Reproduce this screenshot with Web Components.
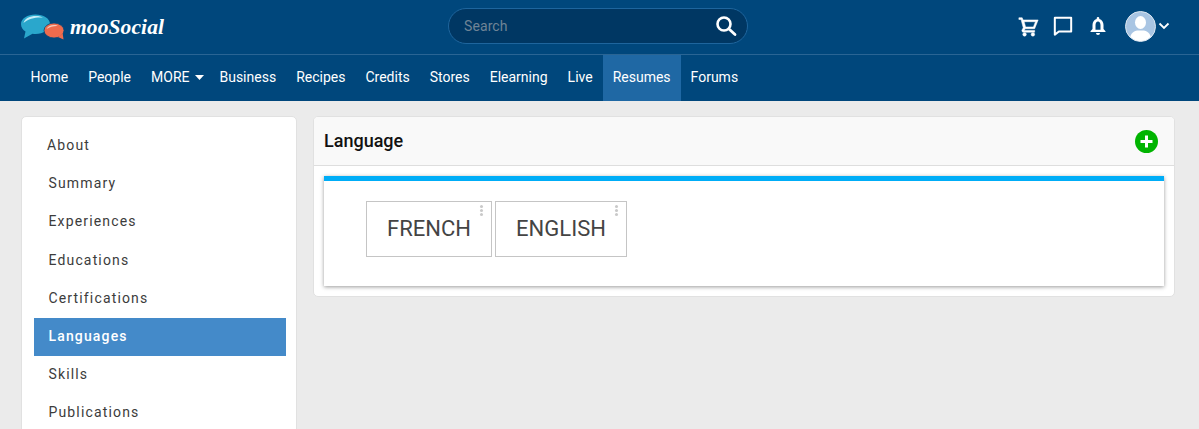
<!DOCTYPE html>
<html><head><meta charset="utf-8"><style>
html,body{margin:0;padding:0;height:429px;overflow:hidden;background:#ebebeb;font-family:Roboto,sans-serif}
</style></head><body>
<template id="t-header"><style>
:host{display:block;background:#00477c;color:#fff}
.top{height:54px;display:flex;align-items:center;position:relative;border-bottom:1px solid #2a6594;padding:0 0 0 21px;box-sizing:content-box}
.logo{display:flex;align-items:center;width:427px;height:54px}
.logo svg{display:block;margin-top:-1px}
.logo b{font:italic bold 21.500px "Liberation Serif",serif;color:#fff;margin-left:5px;letter-spacing:.1px;margin-top:1px}
.search{height:34px;border:1px solid #1e659d;border-radius:18px;background:#003763;display:flex;align-items:center;justify-content:space-between;padding:0 10px 0 15px;box-sizing:content-box;margin-top:-2px;flex:none;width:273px}
.search span{font-size:14px;color:#6f8496;letter-spacing:.1px}
.icons{margin-left:auto;display:flex;align-items:center;height:52px;padding:0 29px 2px 0}
.icons svg{display:block}
.av{width:31px;height:31px;border-radius:50%;background:#a9c5e3;border:1px solid #dbe6f0;box-sizing:border-box;overflow:hidden}
nav{height:46px;display:flex;padding-left:20.500px}
</style><div class="top"><div class="logo">
<svg width="44" height="26" viewBox="0 0 44 26"><path d="M14.500 .5C6.500.5 0 4.500 0 10c0 3.500 2 6 4.500 7.500L3 24.500l8.500-4.700c1 .1 2 .2 3 .2C22.500 20 29 15.500 29 10S22.500.5 14.500.5z" fill="#2aa7cc"/><path d="M2.500 9C3.500 4.500 9 2 15 2c3 0 5.500.7 7 1.600C15.500 3 7.500 4.500 2.500 9z" fill="#c4edf8"/><ellipse cx="33" cy="16.500" rx="10" ry="7.500" fill="#ee6b4d" stroke="#00477c" stroke-width=".8"/><path d="M37 23l5.500 2.500-.8-6z" fill="#ee6b4d"/><path d="M25.500 15c1.200-2.400 4-4 7.500-4 2 0 3.200.5 4 1-4-.3-8 .8-11.500 3z" fill="#f9c9b9"/></svg>
<b>mooSocial</b></div>
<div class="search"><span>Search</span>
<svg width="22" height="22" viewBox="0 0 22 22" fill="none" stroke="#fff"><circle cx="9" cy="9" r="6.500" stroke-width="2.600"/><path d="M14 14l6 5.500" stroke-width="2.800" stroke-linecap="round"/></svg></div>
<div class="icons">
<svg width="21" height="21" viewBox="0 0 24 24" fill="#fff" stroke="#fff" stroke-width=".6" style="margin-right:14px"><path d="M1 2h3.800l1 2.500H23l-4 10H8.300l-.9 1.600c-.1.2 0 .4.200.4H19v2H6c-1 0-2-1.200-1.400-2.500L6 13.500 3.500 4H1zm6 4.500 1.700 6h8.900l2.400-6z"/><circle cx="7.500" cy="21" r="2"/><circle cx="17" cy="21" r="2"/></svg>
<svg width="20" height="20" viewBox="0 0 22 22" fill="none" stroke="#fff" stroke-width="2.200" style="margin-right:16px"><path d="M2 2h18v15H6.500L2 20.500z" stroke-linejoin="round"/></svg>
<svg width="18" height="20" viewBox="0 0 18 20" fill="#fff" style="margin-right:18px"><path d="M9 1a1.300 1.300 0 0 1 1.300 1.300v.6C13 3.600 14.500 6 14.500 9v4l2 2.200V16h-15v-.8l2-2.200V9c0-3 1.500-5.400 4.200-6.100v-.6A1.300 1.300 0 0 1 9 1zM6.500 13.800h5V9c0-2-1-3.600-2.500-3.600S6.500 7 6.500 9z"/><path d="M7 17h4a2 2 0 0 1-4 0z"/></svg>
<div class="av"><svg width="29" height="29" viewBox="0 0 29 29" fill="#fff"><ellipse cx="14.500" cy="10.500" rx="5.500" ry="6.500"/><path d="M4 29c0-7 2-9 7-10.500h7c5 1.500 7 3.500 7 10.500z"/></svg></div>
<svg width="12" height="8" viewBox="0 0 12 8" fill="none" stroke="#fff" stroke-width="1.800" style="margin-left:2px"><path d="M1.500 1.500 6 6l4.500-4.500"/></svg>
</div></div>
<nav><slot></slot></nav></template>

<template id="t-nav"><style>
:host{display:flex;align-items:center;height:46px;box-sizing:border-box;padding:0 10px 2px;color:#fff;font-size:14px;font-weight:400;white-space:nowrap}
:host([active]){background:#1f68a4}
</style><slot></slot></template>

<template id="t-side"><style>
:host{display:block;width:276px;box-sizing:border-box;height:330px;background:#fff;border:1px solid #e1e1e1;border-radius:5px;padding:10px 10px 0 12px;flex:none}
</style><slot></slot></template>

<template id="t-item"><style>
:host{display:flex;align-items:center;box-sizing:border-box;height:38.200px;padding:0 0 2px 14.500px;font-size:14px;letter-spacing:1.150px;color:#3c3c3c}
:host([active]){background:#448ac9;color:#fff;font-weight:500}
</style><slot></slot></template>

<template id="t-card"><style>
:host{display:block;width:862px;height:181px;box-sizing:border-box;background:#fff;border:1px solid #e1e1e1;border-radius:5px;overflow:hidden;flex:none}
.h{height:48px;box-sizing:content-box;background:#f9f9f9;border-bottom:1px solid #dedede;display:flex;align-items:center;justify-content:space-between;padding:0 16px 0 10px}
.h span{font-size:18px;font-weight:500;color:#111;margin-top:-2px}
.h svg{display:block}
.b{margin:10px 10px 0;height:110px;box-sizing:border-box;border-top:5px solid #00adf7;background:#fff;box-shadow:0 1px 4px rgba(0,0,0,.4);padding:20px 0 0 42px;display:flex;gap:3px;align-items:flex-start}
</style><div class="h"><span>Language</span><svg width="23" height="23" viewBox="0 0 23 23"><circle cx="11.500" cy="11.500" r="11.500" fill="#01b401"/><path d="M11.500 5.500v12M5.500 11.500h12" stroke="#fff" stroke-width="3"/></svg></div><div class="b"><slot></slot></div></template>

<template id="t-tile"><style>
:host{display:flex;align-items:center;justify-content:center;position:relative;height:56px;box-sizing:border-box;border:1px solid #c5c5c5;padding-bottom:2px;font-size:22px;color:#444;background:#fff}
i{position:absolute;top:3px;right:8px;width:3px;height:3px;background:#c9c9c9;border-radius:50%;box-shadow:0 4px 0 #c9c9c9,0 8px 0 #c9c9c9}
</style><slot></slot><i></i></template>

<template id="t-page"><style>
:host{display:flex;gap:16px;padding:15px 0 0 21px}
</style><slot></slot></template>

<app-header>
<nav-link>Home</nav-link><nav-link>People</nav-link><nav-link style="padding-right:5.500px">MORE&nbsp;<svg width="9" height="5" viewBox="0 0 9 5" style="margin-left:2px"><path d="M0 0h9L4.500 5z" fill="#fff"/></svg></nav-link><nav-link>Business</nav-link><nav-link>Recipes</nav-link><nav-link>Credits</nav-link><nav-link>Stores</nav-link><nav-link>Elearning</nav-link><nav-link>Live</nav-link><nav-link active>Resumes</nav-link><nav-link>Forums</nav-link>
</app-header>
<app-page>
<side-menu>
<side-item style="padding-left:13px">About</side-item><side-item>Summary</side-item><side-item>Experiences</side-item><side-item>Educations</side-item><side-item>Certifications</side-item><side-item active>Languages</side-item><side-item>Skills</side-item><side-item>Publications</side-item>
</side-menu>
<lang-card><lang-tile style="width:126px">FRENCH</lang-tile><lang-tile style="width:132px">ENGLISH</lang-tile></lang-card>
</app-page>
<script>
for(const [n,t] of [['app-header','t-header'],['nav-link','t-nav'],['side-menu','t-side'],['side-item','t-item'],['lang-card','t-card'],['lang-tile','t-tile'],['app-page','t-page']]){
customElements.define(n,class extends HTMLElement{constructor(){super();this.attachShadow({mode:'open'}).appendChild(document.getElementById(t).content.cloneNode(true))}});
}
</script>
</body></html>
